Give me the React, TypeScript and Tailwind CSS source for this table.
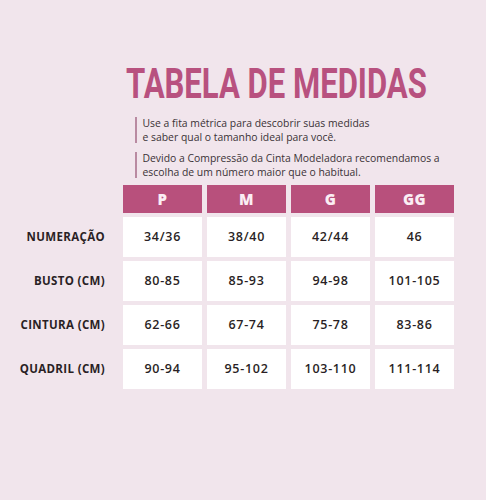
const sizes = ["P", "M", "G", "GG"];

const rows = [
  { label: "NUMERAÇÃO", values: ["34/36", "38/40", "42/44", "46"] },
  { label: "BUSTO (CM)", values: ["80-85", "85-93", "94-98", "101-105"] },
  { label: "CINTURA (CM)", values: ["62-66", "67-74", "75-78", "83-86"] },
  { label: "QUADRIL (CM)", values: ["90-94", "95-102", "103-110", "111-114"] },
];

const Note = ({ lines }: { lines: string[] }) => (
  <div className="flex gap-[6px]">
    <div className="w-[1.5px] bg-[#b98aa1] my-[1px]" />
    <p className="text-[10.4px] leading-[14px] text-[#3a3236]">
      {lines.map((l, i) => (
        <span key={i} className="block">{l}</span>
      ))}
    </p>
  </div>
);

export default function App() {
  return (
    <div
      className="w-[486px] h-[500px] bg-[#f1e5ec] pt-[62px] overflow-hidden"
      style={{ fontFamily: '"Open Sans", "Noto Sans", sans-serif' }}
    >
      <div className="pl-[126px] h-[44px]">
        <h1
          className="inline-block origin-left scale-x-[0.74] text-[42px] leading-[44px] font-bold text-[#b8517f] whitespace-nowrap"
          style={{ fontFamily: 'Roboto, "Liberation Sans", sans-serif' }}
        >
          TABELA DE MEDIDAS
        </h1>
      </div>

      <div className="pl-[135px] mt-[10px] flex flex-col gap-[7px]">
        <Note lines={["Use a fita métrica para descobrir suas medidas", "e saber qual o tamanho ideal para você."]} />
        <Note lines={["Devido a Compressão da Cinta Modeladora recomendamos a", "escolha de um número maior que o habitual."]} />
      </div>

      <div className="mt-[6px] grid grid-cols-[118px_79px_79px_79px_79px] gap-x-[5px] gap-y-[4px]">
        <div />
        {sizes.map(s => (
          <div key={s} className="h-[28px] bg-[#b8507c] text-[#fbeef4] text-[15px] font-extrabold tracking-[0.5px] flex items-center justify-center">
            {s}
          </div>
        ))}
        {rows.map(r => (
          <>
            <div key={r.label} className="h-[40px] flex items-center justify-end pr-[13px] text-[11.5px] font-bold tracking-[0.35px] text-[#2a1f25] whitespace-nowrap">
              {r.label}
            </div>
            {r.values.map((v, i) => (
              <div key={r.label + i} className="h-[40px] bg-white flex items-center justify-center text-[12.5px] font-semibold tracking-[0.7px] text-[#2a1f25]">
                {v}
              </div>
            ))}
          </>
        ))}
      </div>
    </div>
  );
}
